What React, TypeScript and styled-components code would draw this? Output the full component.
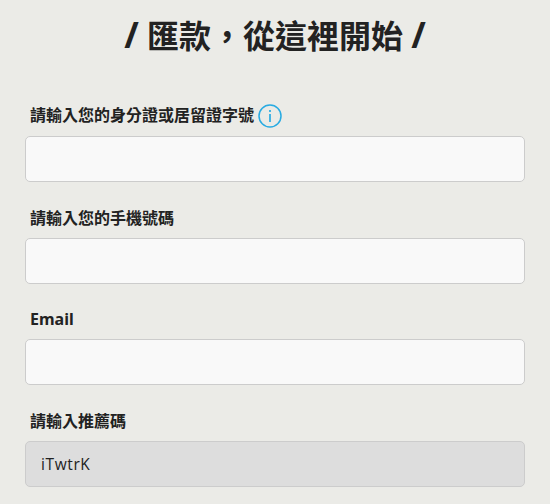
import styled, { createGlobalStyle } from 'styled-components'

const Global = createGlobalStyle`
  html, body {
    margin: 0;
    padding: 0;
    background: #ebebe7;
  }
  body {
    font-family: "Noto Sans", "Noto Sans CJK TC", sans-serif;
    overflow: hidden;
  }
`

const Page = styled.div`
  width: 550px;
  height: 504px;
  overflow: hidden;
  padding: 0 25px;
  box-sizing: border-box;
`

const Title = styled.h1`
  margin: 0;
  padding-top: 14px;
  height: 80.5px;
  box-sizing: border-box;
  text-align: center;
  font-size: 32px;
  line-height: 44px;
  font-weight: 700;
  color: #222;
`

const Slash = styled.span`
  font-size: 35px;
  line-height: 1;
`

const Field = styled.div`
  display: flex;
  flex-direction: column;
  height: 101.5px;
`

const Label = styled.label<{ $raise?: number }>`
  display: flex;
  align-items: center;
  gap: 4px;
  height: 40px;
  box-sizing: border-box;
  margin-top: 15.5px;
  padding-left: 5px;
  padding-bottom: ${p => p.$raise ?? 2}px;
  font-size: 16px;
  font-weight: 700;
  color: #222;
`

const Input = styled.input<{ $locked?: boolean }>`
  height: 46px;
  box-sizing: border-box;
  padding: 0 15px;
  border: 1px solid #ccc;
  border-radius: 5px;
  outline: none;
  background: ${p => (p.$locked ? '#dddddd' : '#f9f9f9')};
  font-family: "Open Sans", sans-serif;
  font-size: 15.5px;
  letter-spacing: 0.6px;
  color: #222;
`

const Info = styled.svg`
  margin-top: 4px;
`

function InfoIcon() {
  return (
    <Info width="24" height="24" viewBox="0 0 24 24" fill="none" stroke="#29abe2">
      <circle cx="12" cy="12" r="11" strokeWidth="1.5" />
      <path d="M12 10v8" strokeWidth="1.7" />
      <path d="M12 6v2" strokeWidth="1.7" />
    </Info>
  )
}

export default function App() {
  return (
    <Page>
      <Global />
      <Title><Slash>/</Slash> 匯款，從這裡開始 <Slash>/</Slash></Title>
      <Field>
        <Label $raise={4}>請輸入您的身分證或居留證字號<InfoIcon /></Label>
        <Input />
      </Field>
      <Field>
        <Label>請輸入您的手機號碼</Label>
        <Input />
      </Field>
      <Field>
        <Label $raise={0}>Email</Label>
        <Input />
      </Field>
      <Field>
        <Label>請輸入推薦碼</Label>
        <Input $locked readOnly value="iTwtrK" />
      </Field>
    </Page>
  )
}
